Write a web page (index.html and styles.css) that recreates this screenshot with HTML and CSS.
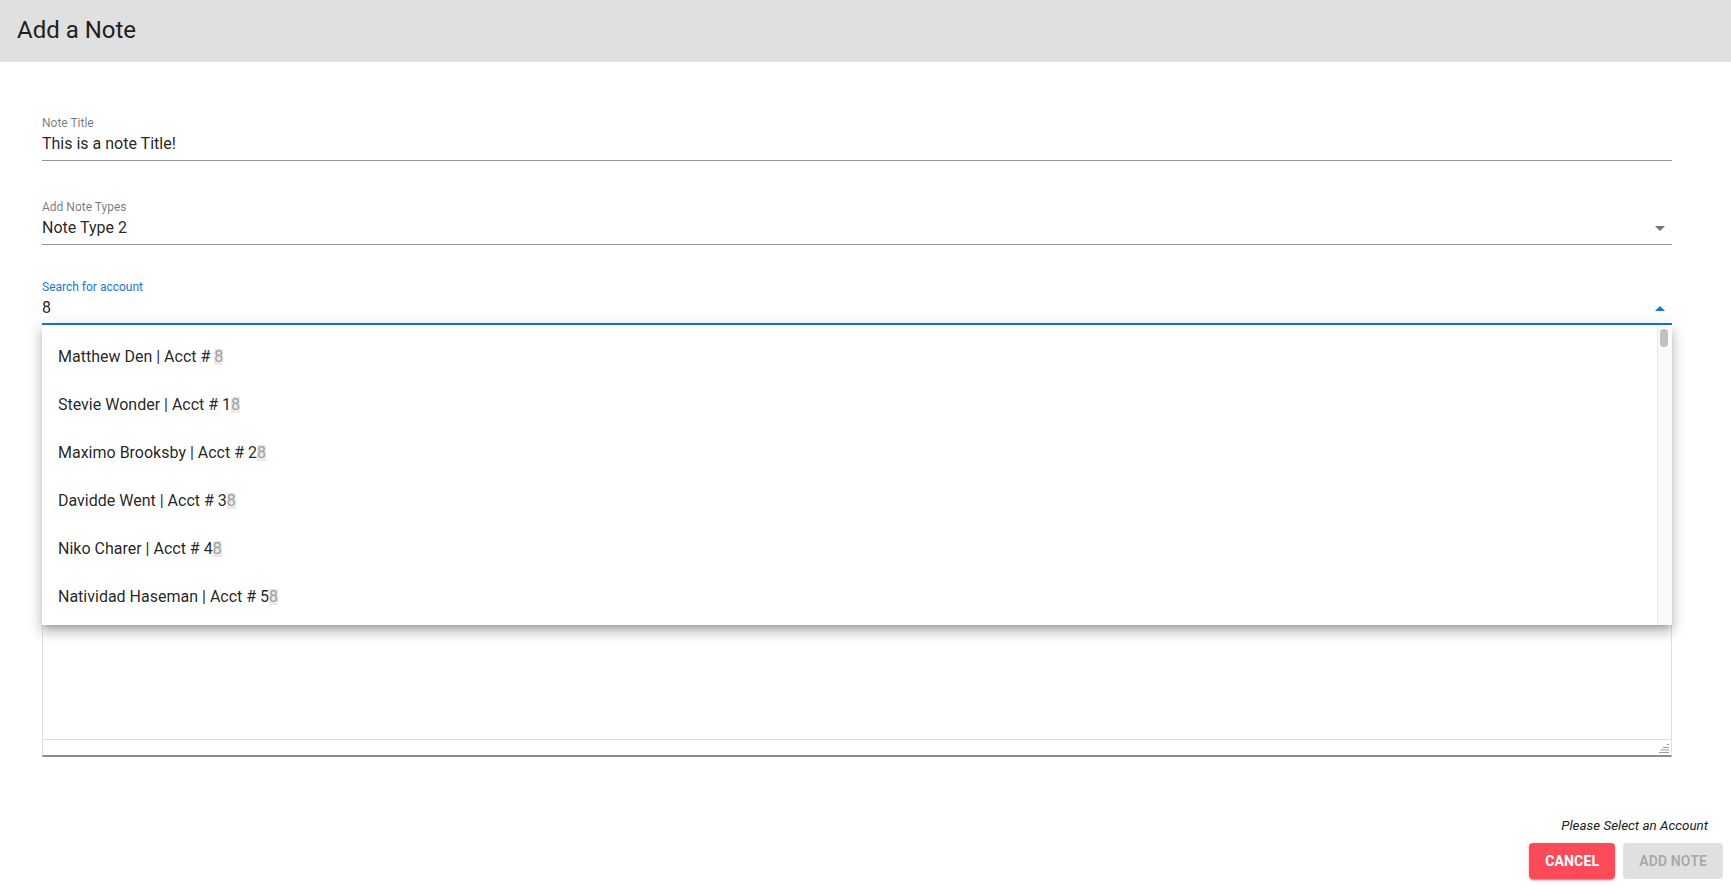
FILE: index.html
```html
<!DOCTYPE html>
<html lang="en">
<head>
<meta charset="utf-8">
<title>Add a Note</title>
<link rel="stylesheet" href="styles.css">
</head>
<body>
  <header class="topbar">
    <h1>Add a Note</h1>
  </header>

  <form class="form">
    <div class="field field-title">
      <label class="label" for="title">Note Title</label>
      <div class="control">
        <input class="input" id="title" type="text" value="This is a note Title!" readonly>
      </div>
    </div>

    <div class="field field-type">
      <span class="label">Add Note Types</span>
      <div class="control">
        <div class="value">Note Type 2</div>
        <svg class="arrow" viewBox="0 0 24 24" aria-hidden="true"><path d="M7 10l5 5 5-5z"/></svg>
      </div>
    </div>

    <div class="field field-account">
      <label class="label focused" for="account">Search for account</label>
      <div class="control focused">
        <input class="input" id="account" type="text" value="8" readonly>
        <svg class="arrow arrow-up" viewBox="0 0 24 24" aria-hidden="true"><path d="M7 14l5-5 5 5z"/></svg>
      </div>

      <div class="menu">
        <ul class="menu-list">
          <li class="menu-item">Matthew Den | Acct # <span class="hl">8</span></li>
          <li class="menu-item">Stevie Wonder | Acct # 1<span class="hl">8</span></li>
          <li class="menu-item">Maximo Brooksby | Acct # 2<span class="hl">8</span></li>
          <li class="menu-item">Davidde Went | Acct # 3<span class="hl">8</span></li>
          <li class="menu-item">Niko Charer | Acct # 4<span class="hl">8</span></li>
          <li class="menu-item">Natividad Haseman | Acct # 5<span class="hl">8</span></li>
        </ul>
        <div class="scrollbar"><div class="thumb"></div></div>
      </div>
    </div>

    <div class="notes">
      <div class="notes-body"></div>
      <div class="notes-foot">
        <svg class="grip" width="10" height="15" viewBox="0 0 10 15" aria-hidden="true">
          <path d="M8 4.5H10M4 7.5H10M1.5 10H10M0 12.5H10" stroke="#9a9a9a" stroke-width="1" fill="none"/>
        </svg>
      </div>
    </div>
  </form>

  <footer class="actions">
    <p class="hint">Please Select an Account</p>
    <div class="buttons">
      <button class="btn btn-cancel" type="button">Cancel</button>
      <button class="btn btn-disabled" type="button" disabled>Add Note</button>
    </div>
  </footer>
</body>
</html>
```

FILE: styles.css
```css
* {
  box-sizing: border-box;
}

html, body {
  height: 100%;
}

body {
  margin: 0;
  min-height: 100vh;
  display: flex;
  flex-direction: column;
  background: #ffffff;
  color: rgba(0, 0, 0, 0.87);
  font-family: Roboto, "Noto Sans", "Liberation Sans", sans-serif;
}

/* Top bar */
.topbar {
  height: 62px;
  flex: none;
  background: #e0e0e0;
  padding: 15px 17px 0;
}

.topbar h1 {
  margin: 0;
  font-size: 24px;
  font-weight: 400;
  line-height: 31px;
  color: #212121;
}

/* Form */
.form {
  display: flex;
  flex-direction: column;
  padding: 0 59px 0 42px;
  margin: 0;
}

.field {
  position: relative;
}

.field-title {
  margin-top: 55px;
}

.field-type {
  margin-top: 40px;
}

.field-account {
  margin-top: 36px;
  z-index: 2;
}

.label {
  display: block;
  font-size: 12px;
  line-height: 12px;
  color: rgba(0, 0, 0, 0.54);
}

.label.focused {
  color: #1976d2;
}

.control {
  position: relative;
  border-bottom: 1px solid rgba(0, 0, 0, 0.42);
}

.control.focused {
  border-bottom-color: #1976d2;
  box-shadow: inset 0 -1px 0 #1976d2;
}

.input,
.value {
  display: block;
  width: 100%;
  height: 31px;
  margin: 0;
  padding: 5px 0 7px;
  border: 0;
  outline: 0;
  background: transparent;
  font-family: inherit;
  font-size: 16px;
  line-height: 19px;
  color: rgba(0, 0, 0, 0.87);
}

.arrow {
  position: absolute;
  right: 0;
  top: 3px;
  width: 24px;
  height: 24px;
  fill: rgba(0, 0, 0, 0.54);
}

.arrow-up {
  top: 4px;
  fill: #1976d2;
}

/* Autocomplete popup */
.menu {
  position: absolute;
  top: 100%;
  left: 0;
  right: 0;
  height: 300px;
  display: flex;
  background: #ffffff;
  box-shadow: 0 5px 5px -3px rgba(0, 0, 0, 0.2),
              0 8px 10px 1px rgba(0, 0, 0, 0.14),
              0 3px 14px 2px rgba(0, 0, 0, 0.12);
}

.menu-list {
  flex: 1;
  margin: 0;
  padding: 8px 0 0;
  list-style: none;
  overflow: hidden;
}

.menu-item {
  height: 48px;
  padding-left: 16px;
  font-size: 16px;
  line-height: 48px;
  white-space: nowrap;
  color: rgba(0, 0, 0, 0.87);
}

.hl {
  display: inline-block;
  line-height: 16px;
  background: #ebebeb;
  color: #9e9e9e;
}

.scrollbar {
  width: 15px;
  flex: none;
  background: #fafafa;
  border-left: 1px solid #e8e8e8;
  padding: 4px 0 0 2px;
}

.thumb {
  width: 8px;
  height: 18px;
  border-radius: 4px;
  background: #c1c1c1;
}

/* Notes area (behind the popup) */
.notes {
  margin-top: 74px;
  border: 1px solid #e0e0e0;
  border-bottom: 2px solid #8d8d8d;
}

.notes-body {
  height: 340px;
  border-bottom: 1px solid #dedede;
}

.notes-foot {
  height: 15px;
  display: flex;
  justify-content: flex-end;
  padding-right: 2px;
}

.grip {
  display: block;
}

/* Footer actions */
.actions {
  margin-top: auto;
  display: flex;
  flex-direction: column;
  align-items: flex-end;
  padding: 0 8px 8px 0;
}

.hint {
  margin: 0 15px 9px 0;
  font-size: 13.4px;
  font-style: italic;
  line-height: 16px;
  color: #212121;
}

.buttons {
  display: flex;
  gap: 8px;
}

.btn {
  height: 36px;
  min-width: 64px;
  padding: 0 16px;
  border: 0;
  border-radius: 4px;
  font-family: inherit;
  font-size: 14px;
  font-weight: 700;
  letter-spacing: 0.01em;
  text-transform: uppercase;
  cursor: pointer;
}

.btn-cancel {
  background: #fd4a59;
  color: #ffffff;
  box-shadow: 0 3px 1px -2px rgba(0, 0, 0, 0.2),
              0 2px 2px 0 rgba(0, 0, 0, 0.14),
              0 1px 5px 0 rgba(0, 0, 0, 0.12);
}

.btn-disabled {
  background: rgba(0, 0, 0, 0.12);
  color: rgba(0, 0, 0, 0.26);
  cursor: default;
}
```
